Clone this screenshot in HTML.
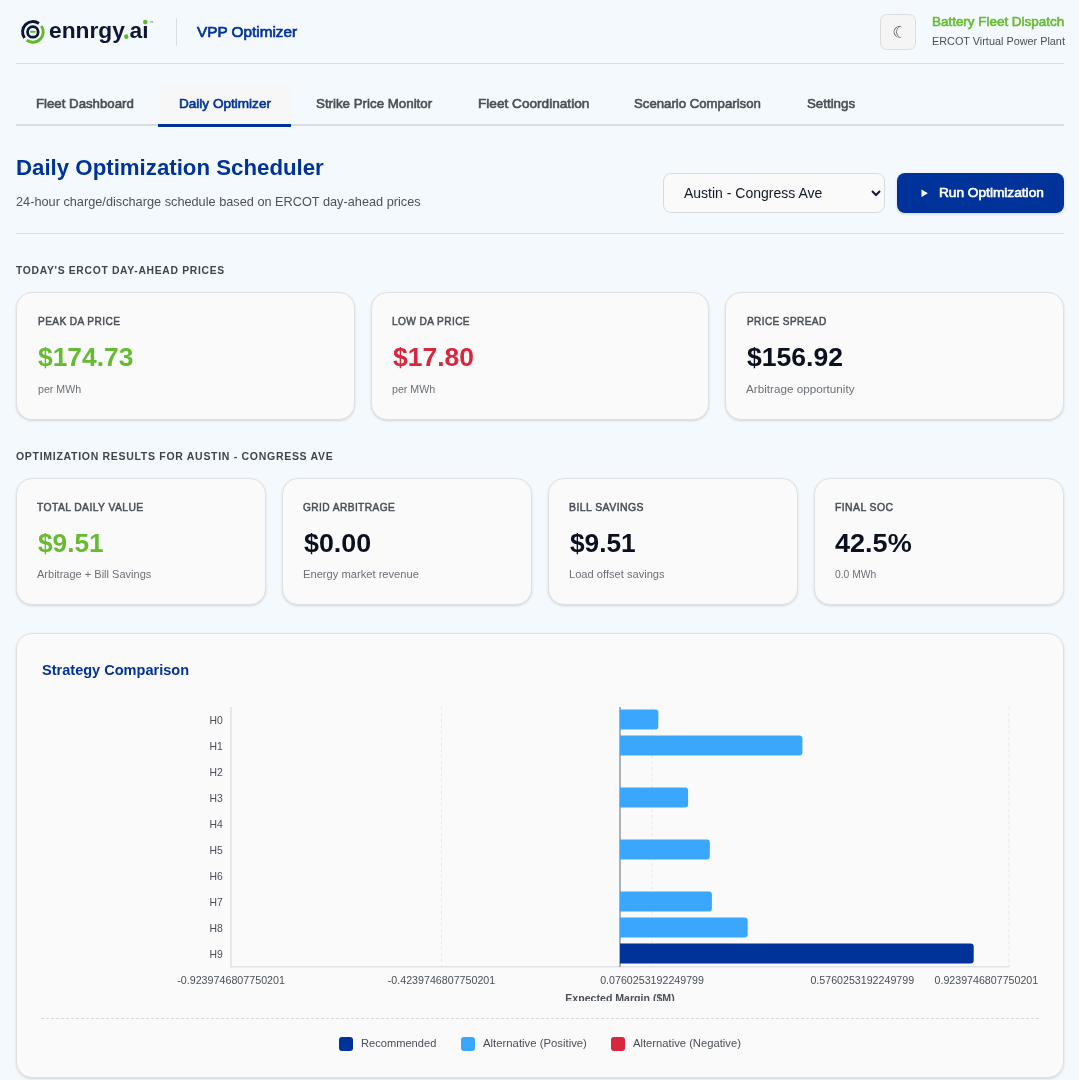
<!DOCTYPE html><html lang="en"><head><meta charset="utf-8"><title>VPP Optimizer</title><style>
*{box-sizing:border-box;margin:0;padding:0}
html,body{width:1079px;height:1080px;overflow:hidden}
body{background:#f4f9fd;font-family:"Liberation Sans",sans-serif;position:relative;color:#333}
.t{position:absolute;white-space:nowrap;line-height:1;display:block;transform-origin:0 0}
.abs{position:absolute}
.card{position:absolute;background:#fafafa;border:1px solid #dfe1e4;border-radius:16px;box-shadow:0 1px 3px rgba(0,0,0,.1),0 1px 2px rgba(0,0,0,.05)}
.line{position:absolute;background:#d9dce0}
select{position:absolute;left:663px;top:173px;width:222px;height:40px;padding:0 16px;font-family:"Liberation Sans",sans-serif;font-size:14px;color:#111827;background-color:#fafafa;border:1px solid #d8dadd;border-radius:8px}
.btn{position:absolute;border:0;padding:0;margin:0;font-family:inherit;text-align:left;cursor:pointer;left:897px;top:173px;width:167px;height:40px;background:#003399;border-radius:8px;box-shadow:0 1px 3px rgba(0,0,0,.15)}
.sw{position:absolute;width:14px;height:14px;border-radius:3px;top:403px}
</style></head><body><div id="app" style="position:absolute;left:0;top:0;width:1079px;height:1080px;will-change:transform">
<svg class="abs" style="left:0;top:0" width="70" height="64" viewBox="0 0 70 64" fill="none"><path d="M24.48 37.98A10.35 10.35 0 0 1 38.93 23.53" stroke="#0d1733" stroke-width="2.9"/><path d="M41.33 25.96A10.35 10.35 0 0 1 26.62 40.17" stroke="#62b922" stroke-width="2.9"/><circle cx="32.85" cy="31.9" r="5.3" stroke="#0d1733" stroke-width="2.8"/><path d="M31 31.85H34.7" stroke="#62b922" stroke-width="2" stroke-linecap="round"/></svg>
<header>
<span class="t" style="left:49.10px;top:18px;line-height:25px;font-size:22.2px;font-weight:700;color:#0d1733;transform:scaleX(1.0268)">ennrgy<span style="color:#62b922">.</span>ai</span>
<svg class="abs" style="left:120px;top:14px" width="32" height="30" viewBox="120 14 32 30"><rect x="143" y="21" width="5" height="4.6" fill="#f4f9fd"/><circle cx="145.3" cy="22.1" r="2.3" fill="#62b922"/><circle cx="126.3" cy="36.7" r="2.2" fill="#62b922"/></svg>
<span class="t" style="left:149px;top:20.7px;font-size:4.5px;color:#6d7488">&#8482;</span>
<div class="line" style="left:176px;top:18px;width:1px;height:28px"></div>
<span class="t" style="left:197.45px;top:23px;line-height:17px;font-size:15.4px;font-weight:400;color:#003399;transform:scaleX(0.9942);-webkit-text-stroke:0.69px #003399">VPP Optimizer</span>
<div class="abs" style="left:880px;top:14px;width:36px;height:36px;background:#f5f5f5;border:1px solid #dcdde0;border-radius:7px"></div>
<span class="t" style="left:892.2px;top:24.2px;width:14px;text-align:center;font-family:'DejaVu Sans',sans-serif;font-size:16.8px;color:#555">&#9790;</span>
<span class="t" style="left:931.69px;top:14px;line-height:15px;font-size:13.3px;font-weight:400;color:#66bb33;transform:scaleX(1.0100);-webkit-text-stroke:0.60px #66bb33">Battery Fleet Dispatch</span>
<span class="t" style="left:931.60px;top:35px;line-height:12px;font-size:11.4px;font-weight:400;color:#4a4f57;transform:scaleX(0.9528)">ERCOT Virtual Power Plant</span>
</header>
<div class="line" style="left:16px;top:63px;width:1048px;height:1px"></div>
<div class="abs" style="left:158px;top:84px;width:133px;height:43px;background:#f7f7f8;border-radius:7px 7px 0 0"></div>
<div class="line" style="left:16px;top:124px;width:1048px;height:2px;background:#d9dce0"></div>
<div class="abs" style="left:158px;top:124px;width:133px;height:3px;background:#003399"></div>
<nav>
<a class="t" style="left:35.71px;top:96px;line-height:15px;font-size:13.3px;font-weight:400;color:#4a4f57;transform:scaleX(0.9947);-webkit-text-stroke:0.60px #4a4f57">Fleet Dashboard</a>
<a class="t" style="left:178.68px;top:96px;line-height:15px;font-size:13.3px;font-weight:400;color:#003399;transform:scaleX(1.0200);-webkit-text-stroke:0.60px #003399">Daily Optimizer</a>
<a class="t" style="left:315.90px;top:96px;line-height:15px;font-size:13.3px;font-weight:400;color:#4a4f57;transform:scaleX(1.0010);-webkit-text-stroke:0.60px #4a4f57">Strike Price Monitor</a>
<a class="t" style="left:478.48px;top:96px;line-height:15px;font-size:13.3px;font-weight:400;color:#4a4f57;transform:scaleX(1.0246);-webkit-text-stroke:0.60px #4a4f57">Fleet Coordination</a>
<a class="t" style="left:634.20px;top:96px;line-height:15px;font-size:13.3px;font-weight:400;color:#4a4f57;transform:scaleX(0.9924);-webkit-text-stroke:0.60px #4a4f57">Scenario Comparison</a>
<a class="t" style="left:806.60px;top:96px;line-height:15px;font-size:13.3px;font-weight:400;color:#4a4f57;transform:scaleX(1.0001);-webkit-text-stroke:0.60px #4a4f57">Settings</a>
</nav>
<h1 class="t" style="left:16.41px;top:155px;line-height:25px;font-size:22.5px;font-weight:700;color:#003399;transform:scaleX(0.9886)">Daily Optimization Scheduler</h1>
<p class="t" style="left:16.30px;top:194px;line-height:15px;font-size:13.3px;font-weight:400;color:#4d5259;transform:scaleX(0.9576)">24-hour charge/discharge schedule based on ERCOT day-ahead prices</p>
<select><option>Austin - Congress Ave</option></select>
<button class="btn" type="button"><svg class="abs" style="left:24px;top:16px" width="8" height="9" viewBox="0 0 8 9"><path d="M0.5 0.5L6.9 4.2L0.5 7.9Z" fill="#fff"/></svg><span class="t" style="left:41.87px;top:12px;line-height:15px;font-size:13.3px;font-weight:400;color:#ffffff;transform:scaleX(1.0279);-webkit-text-stroke:0.60px #ffffff">Run Optimization</span></button>
<div class="line" style="left:16px;top:233px;width:1048px;height:1px"></div>
<h2 class="t" style="left:16.20px;top:264px;line-height:12px;font-size:11.3px;font-weight:700;color:#3f454c;transform:scaleX(0.9154);letter-spacing:0.75px">TODAY&#x27;S ERCOT DAY-AHEAD PRICES</h2>
<h2 class="t" style="left:16.40px;top:450px;line-height:12px;font-size:11.3px;font-weight:700;color:#3f454c;transform:scaleX(0.9305);letter-spacing:0.75px">OPTIMIZATION RESULTS FOR AUSTIN - CONGRESS AVE</h2>
<div class="card" style="left:16.0px;top:292px;width:338.67px;height:128px"><div class="t" style="left:20.55px;top:22px;line-height:12px;font-size:11.3px;font-weight:400;color:#4a4f57;transform:scaleX(0.8961);-webkit-text-stroke:0.51px #4a4f57;letter-spacing:0.45px">PEAK DA PRICE</div><div class="t" style="left:20.80px;top:50px;line-height:28px;font-size:25.7px;font-weight:700;color:#66bb33;transform:scaleX(1.0274)">$174.73</div><div class="t" style="left:20.60px;top:90px;line-height:12px;font-size:11.4px;font-weight:400;color:#6b7078;transform:scaleX(0.9331)">per MWh</div></div>
<div class="card" style="left:370.67px;top:292px;width:338.67px;height:128px"><div class="t" style="left:20.58px;top:22px;line-height:12px;font-size:11.3px;font-weight:400;color:#4a4f57;transform:scaleX(0.8967);-webkit-text-stroke:0.51px #4a4f57;letter-spacing:0.45px">LOW DA PRICE</div><div class="t" style="left:21.13px;top:50px;line-height:28px;font-size:25.7px;font-weight:700;color:#d9263e;transform:scaleX(1.0296)">$17.80</div><div class="t" style="left:20.73px;top:90px;line-height:12px;font-size:11.4px;font-weight:400;color:#6b7078;transform:scaleX(0.9353)">per MWh</div></div>
<div class="card" style="left:725.33px;top:292px;width:338.67px;height:128px"><div class="t" style="left:20.52px;top:22px;line-height:12px;font-size:11.3px;font-weight:400;color:#4a4f57;transform:scaleX(0.8884);-webkit-text-stroke:0.51px #4a4f57;letter-spacing:0.45px">PRICE SPREAD</div><div class="t" style="left:20.47px;top:50px;line-height:28px;font-size:25.7px;font-weight:700;color:#0b1020;transform:scaleX(1.0328)">$156.92</div><div class="t" style="left:20.07px;top:90px;line-height:12px;font-size:11.4px;font-weight:400;color:#6b7078;transform:scaleX(1.0260)">Arbitrage opportunity</div></div>
<div class="card" style="left:16.0px;top:478px;width:250px;height:127px"><div class="t" style="left:20.25px;top:22px;line-height:12px;font-size:11.3px;font-weight:400;color:#4a4f57;transform:scaleX(0.9136);-webkit-text-stroke:0.51px #4a4f57;letter-spacing:0.45px">TOTAL DAILY VALUE</div><div class="t" style="left:21.00px;top:50px;line-height:28px;font-size:25.2px;font-weight:700;color:#66bb33;transform:scaleX(1.0409)">$9.51</div><div class="t" style="left:20.10px;top:89px;line-height:12px;font-size:11.4px;font-weight:400;color:#6b7078;transform:scaleX(0.9680)">Arbitrage + Bill Savings</div></div>
<div class="card" style="left:282px;top:478px;width:250px;height:127px"><div class="t" style="left:20.05px;top:22px;line-height:12px;font-size:11.3px;font-weight:400;color:#4a4f57;transform:scaleX(0.9011);-webkit-text-stroke:0.51px #4a4f57;letter-spacing:0.45px">GRID ARBITRAGE</div><div class="t" style="left:21.00px;top:50px;line-height:28px;font-size:25.2px;font-weight:700;color:#0b1020;transform:scaleX(1.0657)">$0.00</div><div class="t" style="left:20.00px;top:89px;line-height:12px;font-size:11.4px;font-weight:400;color:#6b7078;transform:scaleX(0.9792)">Energy market revenue</div></div>
<div class="card" style="left:548px;top:478px;width:250px;height:127px"><div class="t" style="left:20.05px;top:22px;line-height:12px;font-size:11.3px;font-weight:400;color:#4a4f57;transform:scaleX(0.9287);-webkit-text-stroke:0.51px #4a4f57;letter-spacing:0.45px">BILL SAVINGS</div><div class="t" style="left:21.00px;top:50px;line-height:28px;font-size:25.2px;font-weight:700;color:#0b1020;transform:scaleX(1.0409)">$9.51</div><div class="t" style="left:19.80px;top:89px;line-height:12px;font-size:11.4px;font-weight:400;color:#6b7078;transform:scaleX(0.9761)">Load offset savings</div></div>
<div class="card" style="left:814px;top:478px;width:250px;height:127px"><div class="t" style="left:20.25px;top:22px;line-height:12px;font-size:11.3px;font-weight:400;color:#4a4f57;transform:scaleX(0.9225);-webkit-text-stroke:0.51px #4a4f57;letter-spacing:0.45px">FINAL SOC</div><div class="t" style="left:20.30px;top:50px;line-height:28px;font-size:25.2px;font-weight:700;color:#0b1020;transform:scaleX(1.0743)">42.5%</div><div class="t" style="left:20.30px;top:89px;line-height:12px;font-size:11.4px;font-weight:400;color:#6b7078;transform:scaleX(0.9063)">0.0 MWh</div></div>
<div class="card" style="left:16px;top:633px;width:1048px;height:445px;border-radius:16px">
<h3 class="t" style="left:24.60px;top:27px;line-height:17px;font-size:15.2px;font-weight:700;color:#003399;transform:scaleX(0.9575)">Strategy Comparison</h3>
<svg class="abs" style="left:24px;top:67px;overflow:hidden" width="998" height="300" viewBox="41 701 998 300" font-family="Liberation Sans, sans-serif"><line x1="441.5" y1="707" x2="441.5" y2="967" stroke="#e6e7ea" stroke-width="1" stroke-dasharray="3 3"/><line x1="652" y1="707" x2="652" y2="967" stroke="#e6e7ea" stroke-width="1" stroke-dasharray="3 3"/><line x1="1009" y1="707" x2="1009" y2="967" stroke="#e6e7ea" stroke-width="1" stroke-dasharray="3 3"/><line x1="231" y1="707" x2="231" y2="967" stroke="#e0e2e5" stroke-width="1.5"/><line x1="230.3" y1="966.7" x2="1009" y2="966.7" stroke="#e0e2e5" stroke-width="1.5"/><line x1="620" y1="707" x2="620" y2="967" stroke="#9fa3a7" stroke-width="1.7"/><path d="M620 709.4H655.3a3 3 0 0 1 3 3V726.4a3 3 0 0 1 -3 3H620Z" fill="#3aa6fc"/><path d="M620 735.4H799.4a3 3 0 0 1 3 3V752.4a3 3 0 0 1 -3 3H620Z" fill="#3aa6fc"/><path d="M620 787.4H685.1a3 3 0 0 1 3 3V804.4a3 3 0 0 1 -3 3H620Z" fill="#3aa6fc"/><path d="M620 839.4H706.8a3 3 0 0 1 3 3V856.4a3 3 0 0 1 -3 3H620Z" fill="#3aa6fc"/><path d="M620 891.4H708.9a3 3 0 0 1 3 3V908.4a3 3 0 0 1 -3 3H620Z" fill="#3aa6fc"/><path d="M620 917.4H744.7a3 3 0 0 1 3 3V934.4a3 3 0 0 1 -3 3H620Z" fill="#3aa6fc"/><path d="M620 943.4H970.7a3 3 0 0 1 3 3V960.4a3 3 0 0 1 -3 3H620Z" fill="#003399"/><text x="222.9" y="724" text-anchor="end" font-size="10.5" fill="#4a4f57" textLength="13.3" lengthAdjust="spacingAndGlyphs">H0</text><text x="222.9" y="750" text-anchor="end" font-size="10.5" fill="#4a4f57" textLength="13.3" lengthAdjust="spacingAndGlyphs">H1</text><text x="222.9" y="776" text-anchor="end" font-size="10.5" fill="#4a4f57" textLength="13.3" lengthAdjust="spacingAndGlyphs">H2</text><text x="222.9" y="802" text-anchor="end" font-size="10.5" fill="#4a4f57" textLength="13.3" lengthAdjust="spacingAndGlyphs">H3</text><text x="222.9" y="828" text-anchor="end" font-size="10.5" fill="#4a4f57" textLength="13.3" lengthAdjust="spacingAndGlyphs">H4</text><text x="222.9" y="854" text-anchor="end" font-size="10.5" fill="#4a4f57" textLength="13.3" lengthAdjust="spacingAndGlyphs">H5</text><text x="222.9" y="880" text-anchor="end" font-size="10.5" fill="#4a4f57" textLength="13.3" lengthAdjust="spacingAndGlyphs">H6</text><text x="222.9" y="906" text-anchor="end" font-size="10.5" fill="#4a4f57" textLength="13.3" lengthAdjust="spacingAndGlyphs">H7</text><text x="222.9" y="932" text-anchor="end" font-size="10.5" fill="#4a4f57" textLength="13.3" lengthAdjust="spacingAndGlyphs">H8</text><text x="222.9" y="958" text-anchor="end" font-size="10.5" fill="#4a4f57" textLength="13.3" lengthAdjust="spacingAndGlyphs">H9</text><text x="177.2" y="983.8" font-size="10.5" fill="#4a4f57" textLength="107.8" lengthAdjust="spacingAndGlyphs">-0.9239746807750201</text><text x="387.8" y="983.8" font-size="10.5" fill="#4a4f57" textLength="107.4" lengthAdjust="spacingAndGlyphs">-0.4239746807750201</text><text x="600.2" y="983.8" font-size="10.5" fill="#4a4f57" textLength="103.8" lengthAdjust="spacingAndGlyphs">0.0760253192249799</text><text x="810.4" y="983.8" font-size="10.5" fill="#4a4f57" textLength="103.7" lengthAdjust="spacingAndGlyphs">0.5760253192249799</text><text x="934.5" y="983.8" font-size="10.5" fill="#4a4f57" textLength="103.7" lengthAdjust="spacingAndGlyphs">0.9239746807750201</text><text x="565.3" y="1001.5" font-size="10.5" font-weight="700" fill="#4a4f57" textLength="109.4" lengthAdjust="spacingAndGlyphs">Expected Margin ($M)</text></svg>
<div class="abs" style="left:24px;top:384px;width:998px;height:0;border-top:1px dashed #d6d8dc"></div>
<div class="sw" style="left:322px;background:#003399"></div>
<div class="sw" style="left:444px;background:#3aa6fc"></div>
<div class="sw" style="left:594px;background:#d9263e"></div>
<span class="t" style="left:344.40px;top:403px;line-height:12px;font-size:11.4px;font-weight:400;color:#4a4f57;transform:scaleX(0.9752)">Recommended</span>
<span class="t" style="left:466.20px;top:403px;line-height:12px;font-size:11.4px;font-weight:400;color:#4a4f57;transform:scaleX(0.9947)">Alternative (Positive)</span>
<span class="t" style="left:615.80px;top:403px;line-height:12px;font-size:11.4px;font-weight:400;color:#4a4f57;transform:scaleX(0.9851)">Alternative (Negative)</span>
</div>
</div></body></html>
